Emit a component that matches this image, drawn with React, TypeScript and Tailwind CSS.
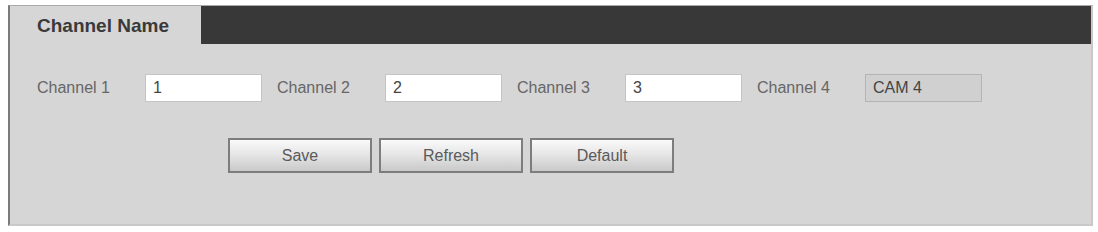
const CHANNELS = [
  { label: "Channel 1", value: "1" },
  { label: "Channel 2", value: "2" },
  { label: "Channel 3", value: "3" },
  { label: "Channel 4", value: "CAM 4", disabled: true },
];

function ActionButton({ label }: { label: string }) {
  return (
    <button className="w-[144px] h-[35px] border-2 border-[#7d7d7d] bg-gradient-to-b from-[#fafafa] via-[#e4e4e4] to-[#c9c9c9] text-[16px] text-[#5a5a5a]">
      {label}
    </button>
  );
}

export default function App() {
  return (
    <div className="w-[1098px] h-[232px] bg-white pt-[5px] pl-[8px] font-['Liberation_Sans',Arial,sans-serif]">
      <div className="w-[1085px] h-[221px] bg-[#d6d6d6] border-l-2 border-l-[#7b7b7b] border-t border-t-[#a9a9a9] border-r-2 border-r-[#c9c9c9] border-b-2 border-b-[#c9c9c9]">
        <div className="flex h-[38px] bg-[#383838]">
          <div className="w-[191px] bg-[#d6d6d6] pl-[27px] pt-[2px] flex items-center text-[19px] font-bold text-[#3a3a3a]">
            Channel Name
          </div>
        </div>

        <div className="flex items-center mt-[30px] pl-[27px] text-[16px] text-[#666]">
          {CHANNELS.map((ch) => (
            <div key={ch.label} className="flex items-center w-[240px]">
              <span className="w-[108px]">{ch.label}</span>
              <input
                readOnly
                value={ch.value}
                className={`w-[117px] h-[28px] px-[7px] border outline-none text-[16px] text-[#444] ${
                  ch.disabled ? "bg-[#d0d0d0] border-[#b4b4b4]" : "bg-white border-[#c4c4c4]"
                }`}
              />
            </div>
          ))}
        </div>

        <div className="flex gap-[7px] mt-[36px] pl-[218px]">
          <ActionButton label="Save" />
          <ActionButton label="Refresh" />
          <ActionButton label="Default" />
        </div>
      </div>
    </div>
  );
}
